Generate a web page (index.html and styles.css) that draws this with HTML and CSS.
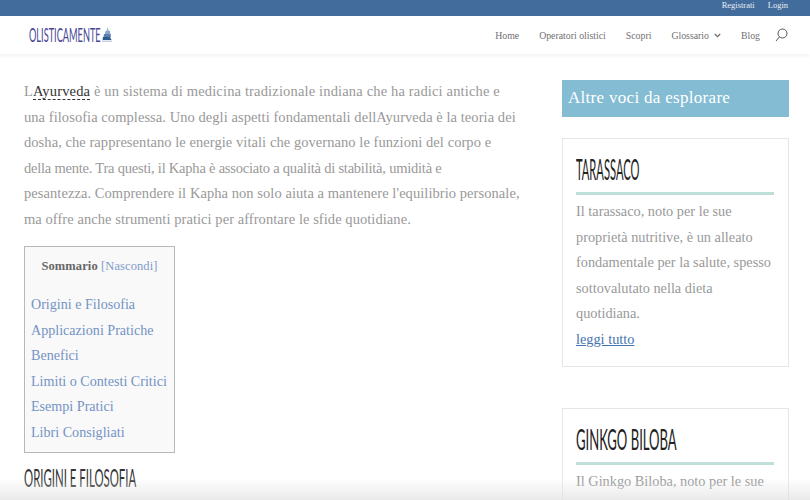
FILE: index.html
```html
<!DOCTYPE html>
<html lang="it">
<head>
<meta charset="utf-8">
<title>Kapha</title>
<link rel="stylesheet" href="styles.css">
</head>
<body>
<div class="topbar"><a>Registrati</a><a>Login</a></div>
<header class="header">
  <div class="logo">
    <div class="logo-box"><span class="logo-text narrow">Olisticamente</span></div>
    <svg class="logo-icon" width="10" height="15" viewBox="0 0 10 15"><path d="M5.500 0l1.500 4H4.500z" fill="#8fc4c0"/><path d="M3.500 4h4.500l.5 3H3z" fill="#8aa6cc"/><path d="M2 7h6.500l.5 3H1.500z" fill="#5a7fb0"/><path d="M1 10h7l1.500 3H.5z" fill="#2f5c8f"/><path d="M0 13.500h10v1.500H0z" fill="#c5d0e2"/></svg>
  </div>
  <nav class="nav">
    <a>Home</a><a>Operatori olistici</a><a>Scopri</a>
    <a class="has-sub">Glossario<svg width="7" height="5" viewBox="0 0 7 5"><path d="M.8 1l2.700 2.700L6.200 1" fill="none" stroke="#666" stroke-width="1.100"/></svg></a>
    <a>Blog</a>
    <svg class="search" width="13" height="14" viewBox="0 0 13 14"><circle cx="7.500" cy="5.500" r="4.500" fill="none" stroke="#555" stroke-width="1"/><path d="M4.300 9L1 13" stroke="#555" stroke-width="1"/></svg>
  </nav>
</header>
<div class="page">
  <main class="content">
    <div class="intro">
      <p class="line-wide">L<a class="term">Ayurveda</a> è un sistema di medicina tradizionale indiana che ha radici antiche e</p>
      <p>una filosofia complessa. Uno degli aspetti fondamentali dellAyurveda è la teoria dei</p>
      <p>dosha, che rappresentano le energie vitali che governano le funzioni del corpo e</p>
      <p class="line-tight">della mente. Tra questi, il Kapha è associato a qualità di stabilità, umidità e</p>
      <p>pesantezza. Comprendere il Kapha non solo aiuta a mantenere l'equilibrio personale,</p>
      <p>ma offre anche strumenti pratici per affrontare le sfide quotidiane.</p>
    </div>
    <div class="toc">
      <div class="toc-title"><b>Sommario</b> <span>[Nascondi]</span></div>
      <ul class="toc-list">
        <li>Origini e Filosofia</li>
        <li>Applicazioni Pratiche</li>
        <li>Benefici</li>
        <li>Limiti o Contesti Critici</li>
        <li>Esempi Pratici</li>
        <li>Libri Consigliati</li>
      </ul>
    </div>
    <h2 class="section-title"><span class="narrow">Origini e Filosofia</span></h2>
  </main>
  <aside class="sidebar">
    <div class="side-head">Altre voci da esplorare</div>
    <article class="card">
      <h3><span class="narrow fit-short">Tarassaco</span></h3>
      <p>Il tarassaco, noto per le sue<br>proprietà nutritive, è un alleato<br>fondamentale per la salute, spesso<br>sottovalutato nella dieta<br>quotidiana.<br><a>leggi tutto</a></p>
    </article>
    <article class="card">
      <h3><span class="narrow fit-long">Ginkgo Biloba</span></h3>
      <p>Il Ginkgo Biloba, noto per le sue</p>
    </article>
  </aside>
</div>
<div class="fade"></div>
</body>
</html>
```
FILE: styles.css
```css
* { box-sizing: border-box; }
html, body { margin: 0; height: 500px; overflow: hidden; background: #fff; }
body { font-family: "Liberation Serif", serif; color: #999; position: relative; }
.narrow { display: inline-block; white-space: nowrap; transform-origin: left center; font-family: "Lato", sans-serif; text-transform: uppercase; }
.topbar { height: 16px; background: #426c9c; display: flex; justify-content: flex-end; gap: 13px; padding-right: 22px; font-size: 8.500px; line-height: 11px; color: #e8eef5; }
.header { height: 38px; background: #fff; display: flex; justify-content: space-between; align-items: center; padding: 0 22px 0 29px; box-shadow: 0 2px 4px rgba(0,0,0,.06); position: relative; }
.logo { display: flex; align-items: flex-end; height: 15px; margin-top: -1px; }
.logo-box { width: 73px; height: 15px; }
.logo-text { font-size: 20px; line-height: 14px; color: #4a4796; transform: scaleX(.46); }
.logo-icon { display: block; }
.nav { display: flex; align-items: center; gap: 20px; font-size: 9.800px; color: #707070; }
.nav a { display: flex; align-items: center; gap: 5px; }
.search { margin-left: -5px; }
.page { display: flex; justify-content: space-between; padding: 25px 21px 0 24px; }
.content { width: 494px; }
.intro { font-size: 14.500px; line-height: 25.500px; white-space: nowrap; letter-spacing: .06px; }
.intro p { margin: 0; }
.intro .line-wide { letter-spacing: .16px; }
.intro .line-tight { letter-spacing: -.22px; }
.term { color: #333; border-bottom: 1px dashed #333; }
.toc { width: 151px; height: 207px; margin-top: 14px; background: #f9f9f9; border: 1px solid #b8b8b8; padding: 11px 6px 0; }
.toc-title { font-size: 12.500px; line-height: 16px; text-align: center; color: #7f9cc8; white-space: nowrap; letter-spacing: .1px; }
.toc-title b { color: #666; }
.toc-list { list-style: none; margin: 18px 0 0; padding: 0; font-size: 14.100px; line-height: 25.500px; color: #7493c4; white-space: nowrap; }
.section-title { margin: 11px 0 0; font-weight: 400; font-size: 25px; line-height: 26px; color: #333; }
.section-title .narrow { transform: scaleX(.456); }
.sidebar { width: 227px; padding-top: 1px; }
.side-head { height: 37px; background: #84bcd3; color: #fff; font-size: 17px; line-height: 36px; padding-left: 6px; letter-spacing: .3px; }
.card { border: 1px solid #e6e6e6; margin-top: 21px; padding: 12px 14px 0 13px; height: 229px; }
.card + .card { margin-top: 41px; }
.card h3 { margin: 0; font-weight: 400; font-size: 29px; line-height: 36px; color: #222; border-bottom: 3px solid #bfdfd8; padding-bottom: 4px; }
.card h3 .fit-short { transform: scaleX(.385); }
.card h3 .fit-long { transform: scaleX(.451); }
.card p { margin: 4px 0 0; font-size: 14.300px; line-height: 25.500px; white-space: nowrap; }
.card a { color: #4474ad; text-decoration: underline; }
.fade { position: absolute; left: 0; right: 0; bottom: 0; height: 22px; background: linear-gradient(to bottom, rgba(225,225,225,0), rgba(225,225,225,.7)); }
```
